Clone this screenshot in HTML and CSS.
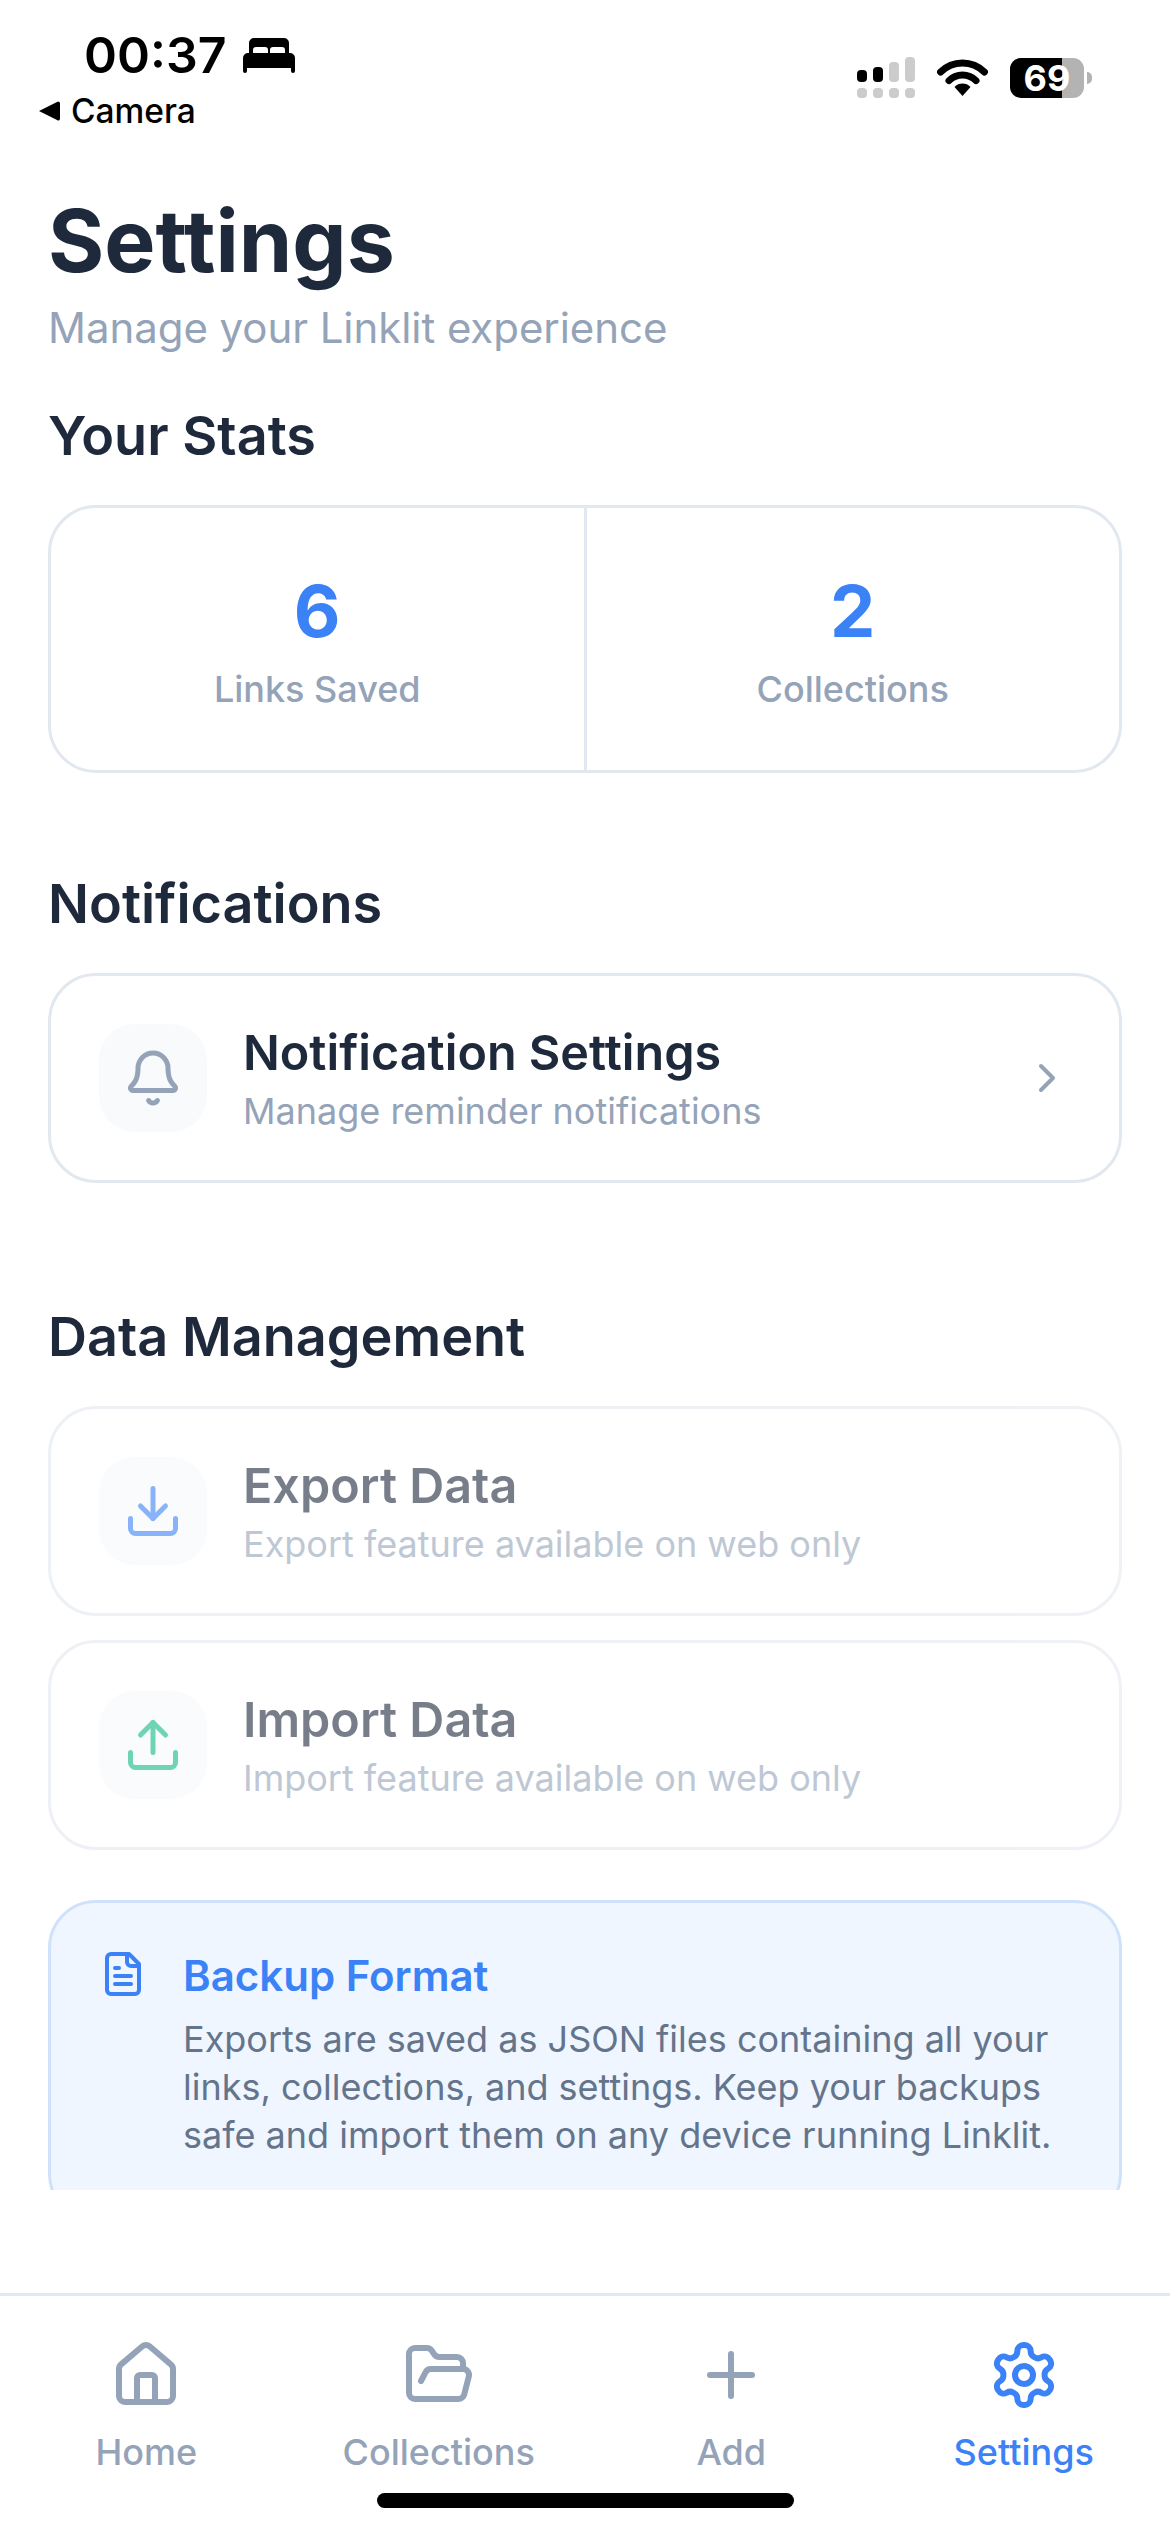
FILE: index.html
```html
<!DOCTYPE html>
<html lang="en">
<head>
    <meta charset="UTF-8">
    <meta name="viewport" content="width=device-width, initial-scale=1.0">
    <title>Linklit - Settings</title>
    <link rel="stylesheet" href="styles.css">
</head>
<body>
    <div class="screen">

        <div class="status-bar">
            <div class="status-left">
                <div class="clock-row">
                    <span class="clock">00:37</span>
                    <svg class="bed" viewBox="0 0 52 35" fill="#000">
                        <path fill-rule="evenodd" d="M6 15V5a5 5 0 0 1 5-5h30a5 5 0 0 1 5 5v10h-4v-3a3 3 0 0 0-3-3h-9a3 3 0 0 0-3 3v3h-2v-3a3 3 0 0 0-3-3h-9a3 3 0 0 0-3 3v3z"/>
                        <path d="M5 15h42a5 5 0 0 1 5 5v13a2 2 0 0 1-4 0v-3H4v3a2 2 0 0 1-4 0V20a5 5 0 0 1 5-5z"/>
                    </svg>
                </div>
                <div class="back-row">
                    <svg class="back-arrow" viewBox="0 0 22 20"><path d="M1 10 19 1a2 2 0 0 1 3 1v16a2 2 0 0 1-3 1z"/></svg>
                    <span>Camera</span>
                </div>
            </div>
            <div class="status-right">
                <svg class="signal" width="58" height="41" viewBox="0 0 58 41">
                    <rect x="0" y="13" width="10" height="12" rx="4" fill="#000"/>
                    <rect x="16" y="10" width="10" height="15" rx="4" fill="#000"/>
                    <rect x="32" y="5" width="10" height="20" rx="4" fill="#ccc"/>
                    <rect x="48" y="0" width="10" height="25" rx="4" fill="#ccc"/>
                    <rect x="0" y="31" width="10" height="10" rx="4" fill="#ccc"/>
                    <rect x="16" y="31" width="10" height="10" rx="4" fill="#ccc"/>
                    <rect x="32" y="31" width="10" height="10" rx="4" fill="#ccc"/>
                    <rect x="48" y="31" width="10" height="10" rx="4" fill="#ccc"/>
                </svg>
                <svg class="wifi" width="51" height="37" viewBox="0 0 51 37" fill="none" stroke="#000">
                    <path stroke-width="7" d="M3.6 13.1a31 31 0 0 1 43.8 0"/>
                    <path stroke-width="7" d="M12 21.6a19 19 0 0 1 27 0"/>
                    <path fill="#000" stroke="none" d="M25.5 37 17.5 28a11 11 0 0 1 16 0z"/>
                </svg>
                <div class="battery">
                    <div class="battery-body">69</div>
                    <div class="battery-nub"></div>
                </div>
            </div>
        </div>

        <div class="content">
            <h1>Settings</h1>
            <p class="subtitle">Manage your Linklit experience</p>

            <section class="stats-section">
                <h2>Your Stats</h2>
                <div class="stats-card">
                    <div class="stat">
                        <div class="stat-value">6</div>
                        <div class="stat-label">Links Saved</div>
                    </div>
                    <div class="stat">
                        <div class="stat-value">2</div>
                        <div class="stat-label">Collections</div>
                    </div>
                </div>
            </section>

            <section class="section">
                <h2>Notifications</h2>
                <div class="row">
                    <div class="row-icon">
                        <svg class="row-svg" viewBox="0 0 24 24" stroke="#94a3b8">
                            <path d="M10.268 21a2 2 0 0 0 3.464 0"/>
                            <path d="M3.262 15.326A1 1 0 0 0 4 17h16a1 1 0 0 0 .74-1.673C19.41 13.956 18 12.499 18 8A6 6 0 0 0 6 8c0 4.499-1.411 5.956-2.738 7.326"/>
                        </svg>
                    </div>
                    <div class="row-text">
                        <div class="row-title">Notification Settings</div>
                        <div class="row-sub">Manage reminder notifications</div>
                    </div>
                    <svg class="chevron" viewBox="0 0 24 24" stroke="#94a3b8"><path d="m9 18 6-6-6-6"/></svg>
                </div>
            </section>

            <section>
                <h2>Data Management</h2>
                <div class="row disabled">
                    <div class="row-icon">
                        <svg class="row-svg" viewBox="0 0 24 24" stroke="#3b82f6">
                            <path d="M21 15v4a2 2 0 0 1-2 2H5a2 2 0 0 1-2-2v-4"/>
                            <path d="m7 10 5 5 5-5"/>
                            <path d="M12 15V3"/>
                        </svg>
                    </div>
                    <div class="row-text">
                        <div class="row-title">Export Data</div>
                        <div class="row-sub">Export feature available on web only</div>
                    </div>
                </div>
                <div class="row disabled">
                    <div class="row-icon">
                        <svg class="row-svg" viewBox="0 0 24 24" stroke="#10b981">
                            <path d="M21 15v4a2 2 0 0 1-2 2H5a2 2 0 0 1-2-2v-4"/>
                            <path d="m17 8-5-5-5 5"/>
                            <path d="M12 3v12"/>
                        </svg>
                    </div>
                    <div class="row-text">
                        <div class="row-title">Import Data</div>
                        <div class="row-sub">Import feature available on web only</div>
                    </div>
                </div>

                <div class="info-box">
                    <svg class="info-icon" viewBox="0 0 24 24" stroke="#3b82f6">
                        <path d="M15 2H6a2 2 0 0 0-2 2v16a2 2 0 0 0 2 2h12a2 2 0 0 0 2-2V7Z"/>
                        <path d="M14 2v4a2 2 0 0 0 2 2h4"/>
                        <path d="M10 9H8"/>
                        <path d="M16 13H8"/>
                        <path d="M16 17H8"/>
                    </svg>
                    <div class="info-text">
                        <div class="info-title">Backup Format</div>
                        <p>Exports are saved as JSON files containing all your links, collections, and settings. Keep your backups safe and import them on any device running Linklit.</p>
                    </div>
                </div>
            </section>
        </div>

        <nav class="tabbar">
            <div class="tab">
                <svg class="tab-icon" viewBox="0 0 24 24">
                    <path d="M15 21v-8a1 1 0 0 0-1-1h-4a1 1 0 0 0-1 1v8"/>
                    <path d="M3 10a2 2 0 0 1 .709-1.528l7-5.999a2 2 0 0 1 2.582 0l7 5.999A2 2 0 0 1 21 10v9a2 2 0 0 1-2 2H5a2 2 0 0 1-2-2z"/>
                </svg>
                <span>Home</span>
            </div>
            <div class="tab">
                <svg class="tab-icon" viewBox="0 0 24 24">
                    <path d="m6 14 1.5-2.9A2 2 0 0 1 9.24 10H20a2 2 0 0 1 1.94 2.5l-1.54 6a2 2 0 0 1-1.94 1.5H4a2 2 0 0 1-2-2V5a2 2 0 0 1 2-2h3.9a2 2 0 0 1 1.69.9l.81 1.2a2 2 0 0 0 1.67.9H18a2 2 0 0 1 2 2v2"/>
                </svg>
                <span>Collections</span>
            </div>
            <div class="tab">
                <svg class="tab-icon" viewBox="0 0 24 24">
                    <path d="M5 12h14"/>
                    <path d="M12 5v14"/>
                </svg>
                <span>Add</span>
            </div>
            <div class="tab active">
                <svg class="tab-icon" viewBox="0 0 24 24">
                    <path d="M12.22 2h-.44a2 2 0 0 0-2 2v.18a2 2 0 0 1-1 1.73l-.43.25a2 2 0 0 1-2 0l-.15-.08a2 2 0 0 0-2.73.73l-.22.38a2 2 0 0 0 .73 2.73l.15.1a2 2 0 0 1 1 1.72v.51a2 2 0 0 1-1 1.74l-.15.09a2 2 0 0 0-.73 2.73l.22.38a2 2 0 0 0 2.73.73l.15-.08a2 2 0 0 1 2 0l.43.25a2 2 0 0 1 1 1.73V20a2 2 0 0 0 2 2h.44a2 2 0 0 0 2-2v-.18a2 2 0 0 1 1-1.73l.43-.25a2 2 0 0 1 2 0l.15.08a2 2 0 0 0 2.73-.73l.22-.39a2 2 0 0 0-.73-2.73l-.15-.08a2 2 0 0 1-1-1.74v-.5a2 2 0 0 1 1-1.74l.15-.09a2 2 0 0 0 .73-2.73l-.22-.38a2 2 0 0 0-2.73-.73l-.15.08a2 2 0 0 1-2 0l-.43-.25a2 2 0 0 1-1-1.73V4a2 2 0 0 0-2-2z"/>
                    <circle cx="12" cy="12" r="3"/>
                </svg>
                <span>Settings</span>
            </div>
            <div class="home-indicator"></div>
        </nav>

    </div>
</body>
</html>
```

FILE: styles.css
```css
* {
    box-sizing: border-box;
}
body {
    margin: 0;
    font-family: 'Inter', sans-serif;
    background-color: #fff;
    color: #1e293b;
}
svg {
    display: block;
    flex: none;
    fill: none;
    stroke-linecap: round;
    stroke-linejoin: round;
}
.screen {
    width: 1170px;
    height: 2532px;
    display: flex;
    flex-direction: column;
    overflow: hidden;
}

/* status bar */
.status-bar {
    height: 190px;
    flex: none;
    display: flex;
    justify-content: space-between;
    align-items: flex-start;
    color: #000;
}
.status-left {
    padding: 25px 0 0 38px;
}
.clock-row {
    display: flex;
    align-items: center;
    gap: 16px;
    padding-left: 46px;
    height: 60px;
}
.clock {
    font-size: 50px;
    font-weight: 600;
}
.bed {
    width: 52px;
    height: 35px;
    fill: #000;
}
.back-row {
    display: flex;
    align-items: center;
    gap: 11px;
    margin-top: 7px;
    height: 38px;
    font-size: 33.5px;
    font-weight: 500;
}
.back-arrow {
    width: 22px;
    height: 20px;
    fill: #000;
}
.status-right {
    display: flex;
    align-items: center;
    gap: 22px;
    padding: 57px 78px 0 0;
}
.battery {
    display: flex;
    align-items: center;
    gap: 3px;
}
.battery-body {
    width: 74px;
    height: 40px;
    border-radius: 11px;
    background: linear-gradient(90deg, #000 52px, #b3b3b3 52px);
    color: #fff;
    font-size: 36px;
    font-weight: 700;
    line-height: 40px;
    text-align: center;
}
.battery-nub {
    width: 5px;
    height: 12px;
    border-radius: 0 6px 6px 0;
    background-color: #b3b3b3;
}

/* scroll area, cut off above the tab bar */
.content {
    height: 2000px;
    flex: none;
    overflow: hidden;
    padding: 0 48px;
}
h1 {
    margin: 0;
    font-size: 86px;
    font-weight: 700;
    line-height: 102px;
}
.subtitle {
    margin: 6px 0 45px;
    font-size: 42px;
    letter-spacing: -0.06px;
    line-height: 60px;
    color: #94a3b8;
}
h2 {
    margin: 0 0 36px;
    font-size: 54px;
    font-weight: 600;
    line-height: 66px;
}
.stats-section {
    margin-bottom: 98px;
}
.section {
    margin-bottom: 121px;
}

.stats-card {
    display: flex;
    height: 268px;
    border: 3px solid #e2e8f0;
    border-radius: 48px;
}
.stat {
    flex: 1;
    display: flex;
    flex-direction: column;
    align-items: center;
    justify-content: center;
    padding-top: 4px;
}
.stat + .stat {
    border-left: 3px solid #e2e8f0;
}
.stat-value {
    font-size: 72px;
    font-weight: 700;
    line-height: 86px;
    color: #3b82f6;
}
.stat-label {
    margin-top: 10px;
    font-size: 36px;
    font-weight: 500;
    line-height: 51px;
    color: #94a3b8;
}

.row {
    display: flex;
    align-items: center;
    gap: 36px;
    padding: 48px;
    border: 3px solid #e2e8f0;
    border-radius: 48px;
    margin-bottom: 24px;
}
.disabled {
    opacity: 0.6;
}
.row-icon {
    width: 108px;
    height: 108px;
    flex: none;
    display: flex;
    align-items: center;
    justify-content: center;
    background-color: #f8fafc;
    border-radius: 36px;
}
.row-svg {
    width: 60px;
    height: 60px;
    stroke-width: 2;
}
.row-text {
    flex: 1;
    padding-top: 2px;
}
.row-title {
    font-size: 48.5px;
    font-weight: 600;
    line-height: 54px;
}
.row-sub {
    margin-top: 10px;
    font-size: 36px;
    line-height: 42px;
    color: #94a3b8;
}
.chevron {
    width: 48px;
    height: 48px;
    stroke-width: 2;
}

.info-box {
    display: flex;
    gap: 36px;
    margin-top: 50px;
    padding: 47px 48px 60px;
    background-color: #eff6ff;
    border: 3px solid #d0e2fb;
    border-radius: 48px;
}
.info-icon {
    width: 48px;
    height: 48px;
    stroke-width: 2;
}
.info-title {
    font-size: 42px;
    font-weight: 600;
    line-height: 52px;
    color: #3b82f6;
    margin-bottom: 13px;
}
.info-text p {
    margin: 0;
    font-size: 36px;
    line-height: 48px;
    color: #64748b;
}

/* tab bar */
.tabbar {
    position: relative;
    margin-top: auto;
    display: flex;
    height: 239px;
    flex: none;
    padding-top: 43px;
    border-top: 3px solid #e2e8f0;
}
.tab {
    flex: 1;
    display: flex;
    flex-direction: column;
    align-items: center;
    gap: 17px;
    font-size: 36px;
    font-weight: 500;
    line-height: 48px;
    color: #94a3b8;
}
.tab-icon {
    width: 72px;
    height: 72px;
    stroke: #94a3b8;
    stroke-width: 2;
}
.tab.active {
    color: #3b82f6;
}
.active .tab-icon {
    stroke: #3b82f6;
}
.home-indicator {
    position: absolute;
    left: 377px;
    bottom: 24px;
    width: 417px;
    height: 15px;
    border-radius: 8px;
    background-color: #000;
}
```
